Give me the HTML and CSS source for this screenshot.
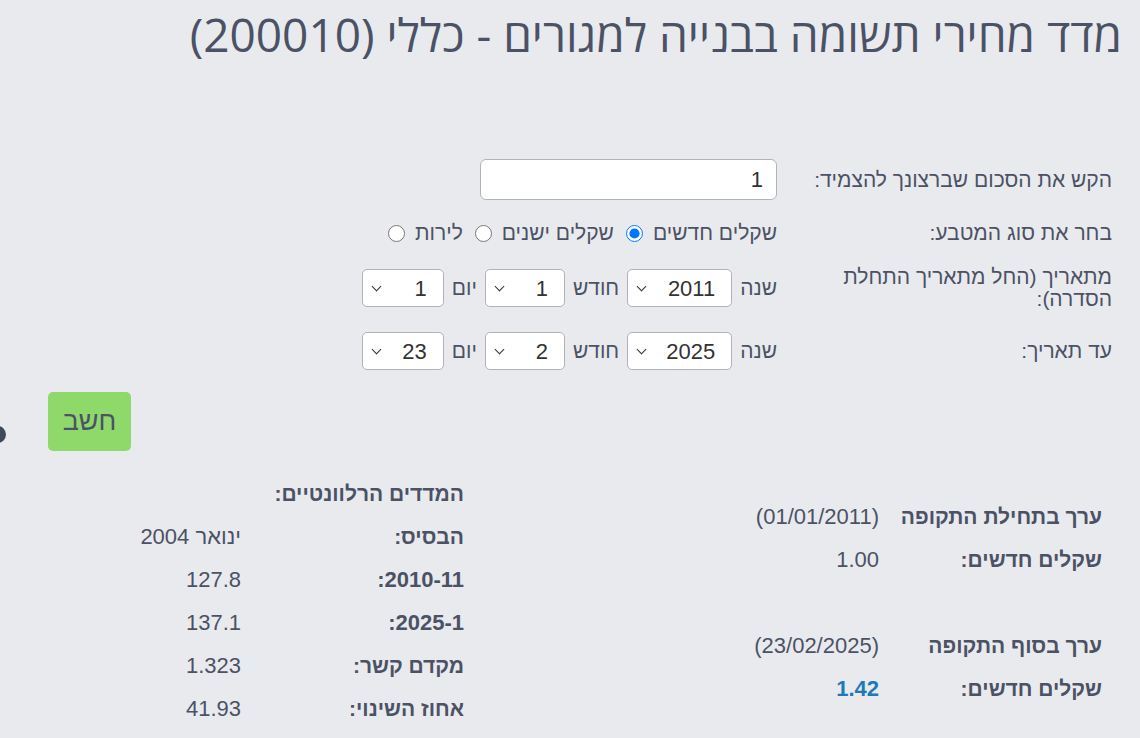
FILE: index.html
```html
<!DOCTYPE html>
<html lang="he" dir="rtl">
<head>
<meta charset="utf-8">
<title>מדד מחירי תשומה בבנייה למגורים - כללי</title>
<link rel="stylesheet" href="styles.css">
</head>
<body>
<div class="page">
  <h1 class="title">מדד מחירי תשומה בבנייה למגורים - כללי (200010)</h1>

  <form class="calc">
    <div class="row">
      <label class="lbl">הקש את הסכום שברצונך להצמיד:</label>
      <input class="amount" type="text" value="1">
    </div>
    <div class="row">
      <span class="lbl">בחר את סוג המטבע:</span>
      <div class="radios">
        <label class="opt">שקלים חדשים <input type="radio" name="cur" checked></label>
        <label class="opt">שקלים ישנים <input type="radio" name="cur"></label>
        <label class="opt">לירות <input type="radio" name="cur"></label>
      </div>
    </div>
    <div class="row">
      <span class="lbl">מתאריך (החל מתאריך התחלת הסדרה):</span>
      <div class="dates">
        <span>שנה</span>
        <span class="sel sel-year"><select><option>2011</option></select></span>
        <span>חודש</span>
        <span class="sel sel-month"><select><option>1</option></select></span>
        <span>יום</span>
        <span class="sel sel-day"><select><option>1</option></select></span>
      </div>
    </div>
    <div class="row">
      <span class="lbl">עד תאריך:</span>
      <div class="dates">
        <span>שנה</span>
        <span class="sel sel-year"><select><option>2025</option></select></span>
        <span>חודש</span>
        <span class="sel sel-month"><select><option>2</option></select></span>
        <span>יום</span>
        <span class="sel sel-day"><select><option>23</option></select></span>
      </div>
    </div>
    <div class="actions">
      <button type="button" class="btn">חשב</button>
    </div>
  </form>

  <div class="results">
    <div class="res res-values">
      <div class="r"><span class="k">ערך בתחילת התקופה</span><span class="v">(01/01/2011)</span></div>
      <div class="r"><span class="k">שקלים חדשים:</span><span class="v">1.00</span></div>
      <div class="r"></div>
      <div class="r"><span class="k">ערך בסוף התקופה</span><span class="v">(23/02/2025)</span></div>
      <div class="r"><span class="k">שקלים חדשים:</span><span class="v v-strong">1.42</span></div>
    </div>
    <div class="res res-index">
      <div class="r"><span class="k">המדדים הרלוונטיים:</span></div>
      <div class="r"><span class="k">הבסיס:</span><span class="v">ינואר 2004</span></div>
      <div class="r"><span class="k num">2010-11:</span><span class="v">127.8</span></div>
      <div class="r"><span class="k num">2025-1:</span><span class="v">137.1</span></div>
      <div class="r"><span class="k">מקדם קשר:</span><span class="v">1.323</span></div>
      <div class="r"><span class="k">אחוז השינוי:</span><span class="v">41.93</span></div>
    </div>
  </div>

  <span class="dot"></span>
</div>
</body>
</html>
```

FILE: styles.css
```css
html, body {
  margin: 0;
  padding: 0;
}
body {
  background: #e9eaee;
  color: #4b5265;
  font-family: "Liberation Sans", Arial, sans-serif;
  direction: rtl;
  overflow: hidden;
}
.page {
  position: relative;
  min-height: 738px;
}
.title {
  margin: 0;
  padding: 8px 18px 0 0;
  height: 52px;
  font-family: "Open Sans", "Liberation Sans", sans-serif;
  font-size: 46px;
  font-weight: 400;
  line-height: 52px;
  color: #4b5265;
  white-space: nowrap;
}
.calc {
  margin-top: 99px;
  padding-right: 28px;
  display: flex;
  flex-direction: column;
  gap: 22px;
}
.row {
  display: flex;
  align-items: center;
}
.lbl {
  flex: 0 0 300px;
  padding-left: 35px;
  font-size: 21px;
  line-height: 22px;
}
.amount {
  width: 297px;
  height: 41px;
  box-sizing: border-box;
  border: 1px solid #b3b3b5;
  border-radius: 6px;
  background: #fff;
  font-family: "Liberation Sans", Arial, sans-serif;
  font-size: 22px;
  color: #333;
  text-align: right;
  padding: 0 13px;
  outline: none;
}
.radios {
  display: flex;
  align-items: center;
  gap: 12px;
  font-size: 21px;
  line-height: 22px;
}
.opt {
  display: flex;
  align-items: center;
  gap: 10px;
}
.opt input {
  margin: 0;
  width: 17px;
  height: 17px;
}
.dates {
  display: flex;
  align-items: center;
  gap: 8px;
  font-size: 21px;
}
.sel {
  position: relative;
  display: inline-block;
}
.sel select {
  appearance: none;
  -webkit-appearance: none;
  height: 38px;
  box-sizing: border-box;
  border: 1px solid #b3b3b5;
  border-radius: 5px;
  background: #fff;
  font-family: "Liberation Sans", Arial, sans-serif;
  font-size: 22px;
  color: #333;
  padding: 0 16px 0 28px;
  text-align: right;
  direction: rtl;
  display: block;
}
.sel::after {
  content: "";
  position: absolute;
  left: 11px;
  top: 14px;
  width: 6px;
  height: 6px;
  border-right: 1.6px solid #333;
  border-bottom: 1.6px solid #333;
  transform: rotate(45deg);
  pointer-events: none;
}
.sel-year select { width: 105px; }
.sel-month select { width: 80px; }
.sel-day select { width: 82px; }
.actions {
  display: flex;
  justify-content: flex-end;
  padding-left: 48px;
}
.btn {
  width: 83px;
  height: 59px;
  border: none;
  border-radius: 5px;
  background: #8fd96b;
  color: #4b5265;
  font-family: "Liberation Sans", Arial, sans-serif;
  font-size: 27px;
  padding: 0;
}
.results {
  margin-top: 21px;
  padding-right: 38px;
  display: flex;
  font-size: 21px;
}
.res-values {
  flex: 0 0 638px;
  margin-top: 23px;
}
.res-index {
  flex: 1;
}
.r {
  height: 43px;
  display: grid;
  grid-template-columns: 223px auto;
  align-items: center;
}
.k {
  font-weight: 700;
  white-space: nowrap;
}
.k.num {
  font-size: 22px;
}
.v {
  white-space: nowrap;
  font-size: 22px;
}
.v-strong {
  font-weight: 700;
  color: #1f78b8;
}
.dot {
  position: absolute;
  left: -11px;
  top: 426px;
  width: 17px;
  height: 17px;
  border-radius: 50%;
  background: #3e495b;
}
```
